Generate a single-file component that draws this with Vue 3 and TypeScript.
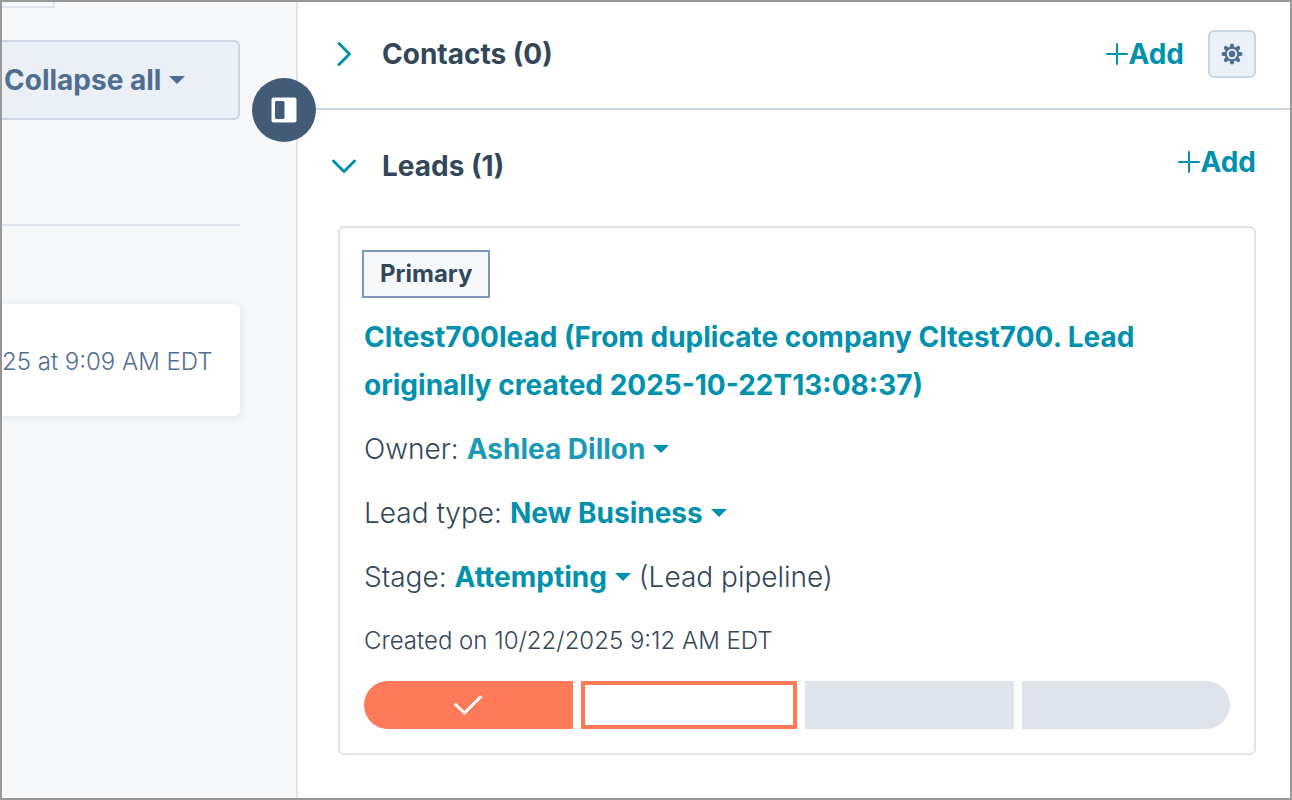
<script setup lang="ts">
import { ref } from 'vue'

interface Field {
  label: string
  value: string
  note?: string
  soft?: boolean
}

type StageState = 'done' | 'current' | 'todo'

const fields: Field[] = [
  { label: 'Owner:', value: 'Ashlea Dillon', soft: true },
  { label: 'Lead type:', value: 'New Business' },
  { label: 'Stage:', value: 'Attempting', note: '(Lead pipeline)' },
]
const stages: StageState[] = ['done', 'current', 'todo', 'todo']

const contactsOpen = ref(false)
const leadsOpen = ref(true)
</script>

<template>
  <div class="page">
    <aside class="timeline">
      <div class="tab-edge"></div>
      <button type="button" class="collapse">
        Collapse all
        <svg class="caret" viewBox="0 0 16 8" aria-hidden="true"><path d="M0 0h16L8 8z" /></svg>
      </button>
      <hr class="rule" />
      <div class="activity">
        <time>25 at 9:09 AM EDT</time>
      </div>
      <button type="button" class="panel-toggle" aria-label="Toggle sidebar">
        <svg viewBox="0 0 26 26" aria-hidden="true">
          <rect x="0.5" y="0.5" width="25" height="25" rx="2" fill="#fff" />
          <rect x="4" y="4" width="9.5" height="18" rx="1.5" fill="#425b76" />
        </svg>
      </button>
    </aside>

    <main class="sidebar">
      <section class="section contacts">
        <header class="head">
          <button type="button" class="heading" :aria-expanded="contactsOpen" @click="contactsOpen = !contactsOpen">
            <svg class="chevron" viewBox="0 0 28 28" aria-hidden="true"><path d="M9 3.5L19.5 14 9 24.5" /></svg>
            <span>Contacts (0)</span>
          </button>
          <button type="button" class="add">
            <svg viewBox="0 0 22 22" aria-hidden="true"><path d="M11 1v20M1 11h20" /></svg>Add
          </button>
          <button type="button" class="settings" aria-label="Contacts settings">
            <svg viewBox="-12 -12 24 24" aria-hidden="true">
              <g stroke="#506e91" stroke-width="4" stroke-linecap="round">
                <path d="M0-8.6V8.6M-8.6 0H8.6M-6.2-6.2L6.2 6.2M-6.2 6.2L6.2-6.2" />
              </g>
              <circle r="7.4" fill="#506e91" />
              <circle r="4.2" fill="#506e91" stroke="#eaf0f6" stroke-width="2" />
            </svg>
          </button>
        </header>
      </section>

      <section class="section leads">
        <header class="head">
          <button type="button" class="heading" :aria-expanded="leadsOpen" @click="leadsOpen = !leadsOpen">
            <svg class="chevron" viewBox="0 0 28 28" aria-hidden="true"><path d="M3.5 9L14 19.5 24.5 9" /></svg>
            <span>Leads (1)</span>
          </button>
          <button type="button" class="add">
            <svg viewBox="0 0 22 22" aria-hidden="true"><path d="M11 1v20M1 11h20" /></svg>Add
          </button>
        </header>

        <article v-if="leadsOpen" class="card">
          <span class="badge">Primary</span>
          <a class="title" href="#">Cltest700lead (From duplicate company Cltest700. Lead originally created 2025-10-22T13:08:37)</a>
          <div v-for="field in fields" :key="field.label" class="field">
            <span>{{ field.label }}</span>
            <button type="button" class="pick" :class="{ soft: field.soft }">
              {{ field.value }}
              <svg class="caret" viewBox="0 0 16 8" aria-hidden="true"><path d="M0 0h16L8 8z" /></svg>
            </button>
            <span v-if="field.note">{{ field.note }}</span>
          </div>
          <p class="created">Created on 10/22/2025 9:12 AM EDT</p>
          <ol class="stages" aria-label="Lead stage">
            <li v-for="(stage, i) in stages" :key="i" :class="stage">
              <svg v-if="stage === 'done'" viewBox="0 0 28 20" aria-hidden="true"><path d="M1.5 9.5L10.5 18 26.5 2" /></svg>
            </li>
          </ol>
        </article>
      </section>
    </main>
  </div>
</template>

<style>
body {
  margin: 0;
}
</style>

<style scoped>
.page {
  box-sizing: border-box;
  display: grid;
  grid-template-columns: 296px minmax(0, 1fr);
  min-height: 100vh;
  border: 2px solid #999;
  background: #fff;
  color: #33475b;
  font-family: Inter, "Open Sans", "Liberation Sans", sans-serif;
  font-size: 28px;
  font-weight: 300;
  line-height: 48px;
}

button {
  margin: 0;
  padding: 0;
  border: 0;
  background: none;
  color: inherit;
  font: inherit;
  white-space: nowrap;
  cursor: pointer;
}

svg {
  flex: none;
}

.caret {
  width: 16px;
  height: 8px;
  fill: currentColor;
}

.timeline {
  position: relative;
  box-sizing: border-box;
  padding-right: 56px;
  border-right: 2px solid #dfe3eb;
  background: #f6f8fa;
}

.tab-edge {
  box-sizing: border-box;
  width: 53px;
  height: 6px;
  border: solid #dfe3eb;
  border-width: 0 2px 2px 0;
}

.collapse {
  box-sizing: border-box;
  display: flex;
  align-items: center;
  gap: 8px;
  width: 100%;
  height: 80px;
  margin-top: 32px;
  padding-left: 2px;
  border: solid #cbd6e2;
  border-width: 2px 2px 2px 0;
  border-radius: 0 6px 6px 0;
  background: #eaf0f6;
  color: #506e91;
  font-weight: 700;
}

.rule {
  height: 2px;
  margin: 104px 0 78px;
  border: 0;
  background: #dfe3eb;
}

.activity {
  box-sizing: border-box;
  display: flex;
  align-items: center;
  height: 112px;
  padding-top: 4px;
  border-radius: 0 6px 6px 0;
  background: #fff;
  box-shadow: 0 2px 10px rgba(45, 85, 115, 0.12);
  color: #506e91;
  font-size: 24px;
  white-space: nowrap;
}

.panel-toggle {
  position: absolute;
  top: 76px;
  right: -20px;
  display: grid;
  place-items: center;
  width: 64px;
  height: 64px;
  border-radius: 50%;
  background: #425b76;
}

.panel-toggle svg {
  width: 26px;
  height: 26px;
}

.contacts {
  border-bottom: 2px solid #cbd6e2;
}

.head {
  display: flex;
  align-items: center;
  padding: 28px 34px 30px 32px;
}

.leads .head {
  align-items: flex-start;
  padding-bottom: 36px;
}

.heading {
  display: flex;
  align-items: center;
  gap: 24px;
  margin-right: auto;
  font-weight: 700;
}

.leads .heading {
  padding-top: 4px;
}

.chevron {
  width: 28px;
  height: 28px;
}

.chevron path,
.add path {
  fill: none;
  stroke: #0091ae;
  stroke-width: 3;
  stroke-linecap: round;
  stroke-linejoin: round;
}

.add {
  display: flex;
  align-items: center;
  color: #0091ae;
  font-weight: 700;
}

.add svg {
  width: 22px;
  height: 22px;
}

.add path {
  stroke-width: 2;
}

.settings {
  box-sizing: border-box;
  display: grid;
  place-items: center;
  width: 48px;
  height: 48px;
  margin-left: 24px;
  border: 2px solid #cbd6e2;
  border-radius: 6px;
  background: #eaf0f6;
}

.settings svg {
  width: 24px;
  height: 24px;
}

.card {
  display: flex;
  flex-direction: column;
  gap: 16px;
  margin: 0 34px 43px 40px;
  padding: 22px 24px 24px;
  border: 2px solid #dfe3eb;
  border-radius: 6px;
}

.badge {
  align-self: flex-start;
  margin: 0 0 -1px -2px;
  padding: 0 16px;
  border: 2px solid #7c98b6;
  background: #f6f8fa;
  font-size: 24px;
  font-weight: 700;
  line-height: 44px;
}

.title {
  color: #0091ae;
  font-weight: 700;
  text-decoration: none;
}

.field {
  display: flex;
  align-items: center;
  gap: 8px;
}

.pick {
  display: flex;
  align-items: center;
  gap: 8px;
  color: #0091ae;
  font-weight: 700;
}

.soft {
  color: #1a9ab4;
}

.soft .caret {
  color: #0091ae;
}

.created {
  margin: 0;
  font-size: 24px;
}

.stages {
  display: flex;
  gap: 8px;
  margin: 0;
  padding: 0;
  list-style: none;
}

.stages li {
  flex: 1 1 0;
  display: grid;
  place-items: center;
  height: 48px;
  background: #dfe3eb;
}

.stages .done {
  background: #ff7a59;
}

.stages .current {
  height: 40px;
  border: 4px solid #ff7a59;
  background: #fff;
}

.stages li:first-child {
  border-radius: 24px 0 0 24px;
}

.stages li:last-child {
  border-radius: 0 24px 24px 0;
}

.stages svg {
  width: 28px;
  height: 20px;
  fill: none;
  stroke: #fff;
  stroke-width: 3;
  stroke-linecap: round;
  stroke-linejoin: round;
}
</style>
